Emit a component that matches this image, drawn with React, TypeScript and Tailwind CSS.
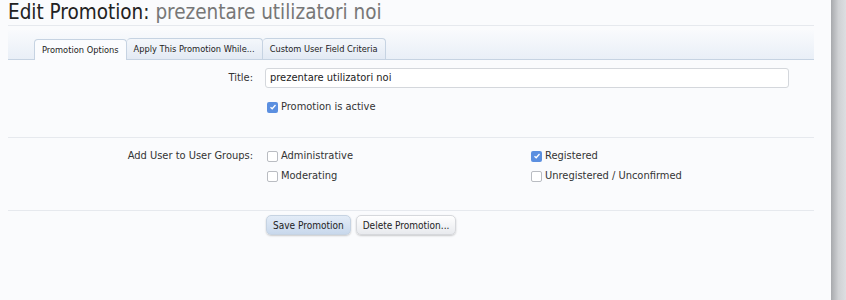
import * as React from 'react';

const font = { fontFamily: '"DejaVu Sans Condensed", "DejaVu Sans", sans-serif' };

function Check({ checked }: { checked?: boolean }) {
  return checked ? (
    <span className="w-[11px] h-[11px] rounded-[2px] bg-[#5b8fe0] flex items-center justify-center shrink-0">
      <svg width="8" height="8" viewBox="0 0 8 8">
        <path d="M1.5 4.2 L3.2 5.8 L6.5 2" stroke="white" strokeWidth="1.3" fill="none" />
      </svg>
    </span>
  ) : (
    <span className="w-[11px] h-[11px] rounded-[2px] border border-[#b9bcc2] bg-white shrink-0" />
  );
}

function Option({ label, checked }: { label: string; checked?: boolean }) {
  return (
    <div className="flex items-center gap-[3px] h-[20px]">
      <Check checked={checked} />
      <span>{label}</span>
    </div>
  );
}

const tab = 'h-[21px] px-[7px] flex items-center border border-b-0 border-[#c6d3e2] rounded-t-[4px] text-[#222] text-[9.2px]';

export default function App() {
  return (
    <div className="flex w-[846px] h-[300px] overflow-hidden bg-[#fafbfd] text-[#333] text-[11px]" style={font}>
      <div className="flex-1 pl-[8px] pr-[17px]">
        <h1 className="text-[20.5px] leading-[24px] text-[#222]">
          Edit Promotion: <span className="text-[#777]">prezentare utilizatori noi</span>
        </h1>
        <div className="border-t border-[#e6e9ee] mt-[1px]" />

        <div className="mt-[3px] h-[31px] border-b border-[#c6d3e2] bg-gradient-to-b from-[#fafbfd] to-[#e9eff7] flex items-end pl-[26px]">
          <div className={`${tab} bg-[#fbfcfe] -mb-px pb-px`}>Promotion Options</div>
          <div className={`${tab} border-l-0 bg-gradient-to-b from-[#f4f7fb] to-[#e3eaf4]`}>Apply This Promotion While...</div>
          <div className={`${tab} border-l-0 bg-gradient-to-b from-[#f4f7fb] to-[#e3eaf4]`}>Custom User Field Criteria</div>
        </div>

        <div className="flex mt-[8px]">
          <div className="w-[245px] text-right leading-[20px]">Title:</div>
          <div className="ml-[12px] flex-1">
            <div className="w-[524px] h-[20px] border border-[#d4d7dc] rounded-[3px] bg-white px-[4px] leading-[18px] text-[#222]">
              prezentare utilizatori noi
            </div>
            <div className="mt-[9px] pl-[2px]">
              <Option label="Promotion is active" checked />
            </div>
          </div>
        </div>

        <div className="border-t border-[#e6e9ee] mt-[20px]" />

        <div className="flex mt-[8px]">
          <div className="w-[245px] text-right leading-[20px]">Add User to User Groups:</div>
          <div className="ml-[14px] grid grid-cols-[264px_1fr]">
            <Option label="Administrative" />
            <Option label="Registered" checked />
            <Option label="Moderating" />
            <Option label="Unregistered / Unconfirmed" />
          </div>
        </div>

        <div className="border-t border-[#e6e9ee] mt-[24px]" />

        <div className="flex gap-[5px] pl-[258px] mt-[4px]">
          <button className="h-[20px] px-[6px] rounded-[5px] border border-[#c6d3e2] bg-gradient-to-b from-[#e3ecf7] to-[#c8d8ec] shadow-[0_1px_2px_rgba(0,0,0,0.2)] text-[#222] text-[10px]">
            Save Promotion
          </button>
          <button className="h-[20px] px-[6px] rounded-[5px] border border-[#d6d8dc] bg-gradient-to-b from-[#ffffff] to-[#e8eaee] shadow-[0_1px_2px_rgba(0,0,0,0.2)] text-[#222] text-[10px]">
            Delete Promotion...
          </button>
        </div>
      </div>
      <div className="w-[15px] bg-gradient-to-r from-[#a7a9ad] via-[#cfd1d4] to-[#dcdee1]" />
    </div>
  );
}
